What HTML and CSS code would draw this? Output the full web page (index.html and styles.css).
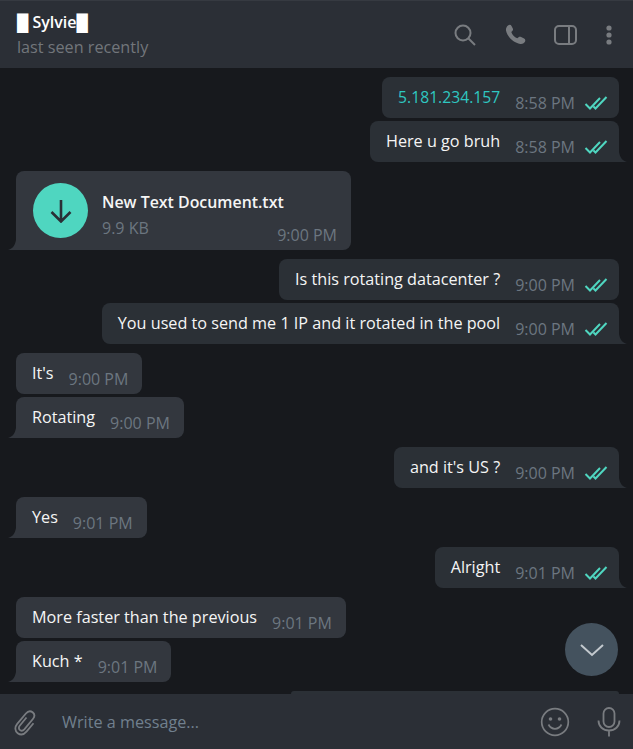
FILE: index.html
```html
<!DOCTYPE html>
<html lang="en">
<head>
<meta charset="utf-8">
<title>Sylvie</title>
<link rel="stylesheet" href="styles.css">
</head>
<body>
<svg class="defs" width="0" height="0" aria-hidden="true">
  <symbol id="check" viewBox="0 0 24 14">
    <path d="M1.500 8l4.500 4.500L16 2M9.500 10.500l2 2L22.500 1" fill="none" stroke="currentColor" stroke-width="2"/>
  </symbol>
  <symbol id="tail-r" viewBox="0 0 8 10">
    <path d="M0 0v10h8C4 9 1 6 0 0z" fill="currentColor"/>
  </symbol>
  <symbol id="tail-l" viewBox="0 0 8 10">
    <path d="M8 0v10H0C4 9 7 6 8 0z" fill="currentColor"/>
  </symbol>
</svg>
<div class="app">
  <header class="header">
    <div class="peer">
      <div class="peer-name">█ Sylvie█</div>
      <div class="peer-status">last seen recently</div>
    </div>
    <div class="header-actions">
      <svg class="icon act-search" width="24" height="24" viewBox="0 0 24 24"><circle cx="10" cy="10" r="7.500" fill="none" stroke="currentColor" stroke-width="2"/><path d="M15.500 15.500l6.500 6.500" stroke="currentColor" stroke-width="2" fill="none"/></svg>
      <svg class="icon act-phone" width="24" height="24" viewBox="0 0 24 24"><path d="M4 2.500c1.400-1 2.900-.8 3.500.4l1.300 2.600c.5 1 .2 1.800-.5 2.500l-1 1c.9 3 3 5.200 6 6.300l1.300-1c.8-.6 1.700-.6 2.500-.2l3 1.500c1.300.7 1.600 2.200.7 3.500-1 1.500-2.700 2.200-4.600 1.900C9.500 19.500 3.300 14 2 7.600c-.3-2 .5-3.900 2-5.100z" fill="currentColor"/></svg>
      <svg class="icon act-panel" width="24" height="24" viewBox="0 0 24 24"><rect x="2" y="3" width="21" height="18" rx="4" fill="none" stroke="currentColor" stroke-width="2"/><path d="M16 3v18" fill="none" stroke="currentColor" stroke-width="2"/></svg>
      <svg class="icon" width="24" height="24" viewBox="0 0 24 24"><circle cx="12" cy="5" r="2.600" fill="currentColor"/><circle cx="12" cy="12" r="2.600" fill="currentColor"/><circle cx="12" cy="19" r="2.600" fill="currentColor"/></svg>
    </div>
  </header>

  <main class="chat">
    <div class="group out">
      <div class="bubble"><span class="text link">5.181.234.157</span><span class="meta"><span class="time">8:58 PM</span><svg class="check" width="24" height="14"><use href="#check"/></svg></span></div>
      <div class="bubble tailed"><span class="text">Here u go bruh</span><span class="meta"><span class="time">8:58 PM</span><svg class="check" width="24" height="14"><use href="#check"/></svg></span><svg class="tail" width="8" height="10"><use href="#tail-r"/></svg></div>
    </div>

    <div class="group in">
      <div class="bubble file tailed">
        <div class="file-icon"><svg width="24" height="24" viewBox="0 0 24 24"><path d="M12 1v21M2.500 13l9.500 9.500 9.500-9.500" fill="none" stroke="#2a3036" stroke-width="2.600"/></svg></div>
        <div class="file-info">
          <div class="file-name">New Text Document.txt</div>
          <div class="file-size">9.9 KB</div>
        </div>
        <span class="time file-time">9:00 PM</span>
        <svg class="tail" width="8" height="10"><use href="#tail-l"/></svg>
      </div>
    </div>

    <div class="group out">
      <div class="bubble"><span class="text">Is this rotating datacenter ?</span><span class="meta"><span class="time">9:00 PM</span><svg class="check" width="24" height="14"><use href="#check"/></svg></span></div>
      <div class="bubble tailed"><span class="text">You used to send me 1 IP and it rotated in the pool</span><span class="meta"><span class="time">9:00 PM</span><svg class="check" width="24" height="14"><use href="#check"/></svg></span><svg class="tail" width="8" height="10"><use href="#tail-r"/></svg></div>
    </div>

    <div class="group in">
      <div class="bubble"><span class="text">It's</span><span class="meta"><span class="time">9:00 PM</span></span></div>
      <div class="bubble tailed"><span class="text">Rotating</span><span class="meta"><span class="time">9:00 PM</span></span><svg class="tail" width="8" height="10"><use href="#tail-l"/></svg></div>
    </div>

    <div class="group out">
      <div class="bubble tailed"><span class="text">and it's US ?</span><span class="meta"><span class="time">9:00 PM</span><svg class="check" width="24" height="14"><use href="#check"/></svg></span><svg class="tail" width="8" height="10"><use href="#tail-r"/></svg></div>
    </div>

    <div class="group in">
      <div class="bubble tailed"><span class="text">Yes</span><span class="meta"><span class="time">9:01 PM</span></span><svg class="tail" width="8" height="10"><use href="#tail-l"/></svg></div>
    </div>

    <div class="group out">
      <div class="bubble tailed"><span class="text">Alright</span><span class="meta"><span class="time">9:01 PM</span><svg class="check" width="24" height="14"><use href="#check"/></svg></span><svg class="tail" width="8" height="10"><use href="#tail-r"/></svg></div>
    </div>

    <div class="group in">
      <div class="bubble"><span class="text">More faster than the previous</span><span class="meta"><span class="time">9:01 PM</span></span></div>
      <div class="bubble tailed"><span class="text">Kuch *</span><span class="meta"><span class="time">9:01 PM</span></span><svg class="tail" width="8" height="10"><use href="#tail-l"/></svg></div>
    </div>

    <div class="group out">
      <div class="bubble-peek"></div>
    </div>

    <button class="scroll-down" aria-label="Scroll to bottom"><svg width="26" height="16" viewBox="0 0 26 16"><path d="M2 3l11 10L24 3" fill="none" stroke="#c3c9ce" stroke-width="2"/></svg></button>
  </main>

  <footer class="composer">
    <svg class="icon clip" width="26" height="28" viewBox="0 0 26 28"><path d="M13.500 9.500l-6.800 8.300c-1.200 1.500-1 3.300.3 4.300 1.300 1 3 .8 4.300-.7l8.600-10.400c2-2.500 1.700-5.100-.3-6.700-2-1.600-4.700-1.200-6.700 1.200L4.200 15.900c-2.700 3.300-2.300 7.300.5 9.300 2.800 2 6.300 1.400 9-1.800l6.800-8.200" fill="none" stroke="currentColor" stroke-width="1.800"/></svg>
    <div class="placeholder">Write a message...</div>
    <svg class="icon smile" width="30" height="30" viewBox="0 0 30 30"><circle cx="15" cy="15" r="13.300" fill="none" stroke="currentColor" stroke-width="1.700"/><circle cx="10.500" cy="12" r="1.800" fill="currentColor"/><circle cx="19.500" cy="12" r="1.800" fill="currentColor"/><path d="M8.500 17.500c1.500 3 3.800 4.300 6.500 4.300s5-1.300 6.500-4.300" fill="none" stroke="currentColor" stroke-width="1.700"/></svg>
    <svg class="icon mic" width="24" height="30" viewBox="0 0 24 30"><rect x="6.500" y="1" width="11" height="19" rx="5.500" fill="none" stroke="currentColor" stroke-width="1.800"/><path d="M1.500 13.500c0 6 4.500 10 10.500 10s10.500-4 10.500-10M12 23.500v6" fill="none" stroke="currentColor" stroke-width="1.800"/></svg>
  </footer>
</div>
</body>
</html>
```
FILE: styles.css
```css
* { box-sizing: border-box; }
html, body { margin: 0; height: 100%; overflow: hidden; }
body {
  background: #17191d;
  font-family: "Open Sans", "Noto Sans", sans-serif;
  font-size: 16.200px;
  color: #f5f5f5;
}
.defs { position: absolute; }
.app { display: flex; flex-direction: column; height: 749px; }

.header {
  flex: none;
  height: 68px;
  background: #2b2f36;
  border-top: 1px solid #363a41;
  display: flex;
  align-items: center;
  justify-content: space-between;
  padding: 0 12px 0 17px;
}
.peer-name { font-size: 16px; font-weight: 600; line-height: 22px; color: #fff; height: 22px; }
.peer-status { line-height: 23px; margin-top: 3px; color: #72767b; }
.header-actions { display: flex; align-items: center; }
.icon { display: block; color: #797c80; flex: none; }
.act-search { margin-right: 27px; }
.act-phone { margin-right: 25px; }
.act-panel { margin-right: 20px; }

.chat {
  flex: 1;
  min-height: 0;
  position: relative;
  padding: 9px 14px 0 16px;
  display: flex;
  flex-direction: column;
  gap: 9px;
}
.group { display: flex; flex-direction: column; gap: 3px; }
.group.out { align-items: flex-end; }
.group.in { align-items: flex-start; }

.bubble {
  position: relative;
  height: 41px;
  border-radius: 8px;
  padding: 0 16px;
  display: flex;
  line-height: 22px;
}
.out .bubble { background: #2b3036; color: #2b3036; }
.in .bubble { background: #33373e; color: #33373e; }
.text { color: #f5f5f5; padding-top: 9px; white-space: nowrap; }
.text.link { color: #2fc7c1; font-size: 15.700px; }
.meta { display: flex; align-items: flex-start; margin-left: 15px; padding-top: 15px; }
.time { font-size: 16px; line-height: 22px; color: #6c7680; white-space: nowrap; }
.out .bubble .meta { margin-right: -5px; }
.in .bubble .meta { margin-right: -2px; }
.check { color: #4fd6c0; margin: 4px 0 0 9px; flex: none; }
.tail { position: absolute; bottom: 0; }
.out .tailed { border-bottom-right-radius: 0; }
.in .tailed { border-bottom-left-radius: 0; }
.out .tail { left: 100%; }
.in .tail { right: 100%; }

.file { height: 79px; width: 335px; padding: 0 0 0 17px; align-items: center; }
.file-icon {
  flex: none;
  width: 55px;
  height: 55px;
  border-radius: 50%;
  background: #4fd6c0;
  display: flex;
  align-items: center;
  justify-content: center;
}
.file-info { margin-left: 14px; margin-top: 10px; }
.file-name { font-weight: 600; font-size: 15.900px; line-height: 24px; color: #f5f5f5; }
.file-size { font-size: 16px; line-height: 28px; color: #6c7680; }
.file-time { position: absolute; right: 14px; bottom: 4px; }

.bubble-peek {
  width: 328px;
  height: 3px;
  background: #2b3036;
  border-radius: 8px 8px 0 0;
}

.scroll-down {
  position: absolute;
  right: 15px;
  top: 555px;
  width: 53px;
  height: 53px;
  border: 0;
  padding: 0;
  border-radius: 50%;
  background: #44525e;
  display: flex;
  align-items: center;
  justify-content: center;
}

.composer {
  flex: none;
  height: 55px;
  background: #2b2f36;
  display: flex;
  align-items: center;
  padding: 0 12px 0 12px;
}
.clip { margin-left: 1px; }
.placeholder { flex: 1; margin-left: 23px; color: #71808e; }
.smile { margin-right: 27px; margin-left: -1px; }
```
